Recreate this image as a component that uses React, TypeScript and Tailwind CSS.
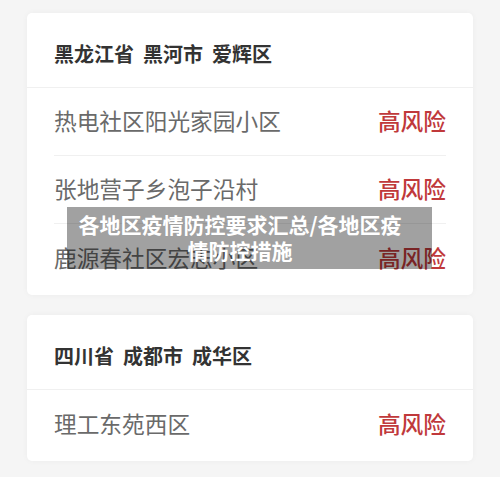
import React from "react";

const font = { fontFamily: '"Noto Sans CJK SC", "Noto Sans", sans-serif' };

function Row({ name, last }: { name: string; last?: boolean }) {
  return (
    <div className="px-[27px]">
      <div className={`flex h-[68px] items-center justify-between ${last ? "" : "border-b border-[#f0f0f0]"}`}>
        <span className="text-[22.7px] text-[#6a6a6a]">{name}</span>
        <span className="text-[22.7px] font-medium text-[#c0393b]">高风险</span>
      </div>
    </div>
  );
}

function Card({ title, rows }: { title: string[]; rows: string[] }) {
  return (
    <div className="overflow-hidden rounded-[5px] bg-white pb-[3px] shadow-[0_0_6px_rgba(0,0,0,0.04)]">
      <div className="flex h-[75px] items-center gap-[9px] border-b border-[#f0f0f0] px-[27px] pt-[7px]">
        {title.map((t) => (
          <span key={t} className="text-[20px] font-bold text-[#333333]">{t}</span>
        ))}
      </div>
      {rows.map((r, i) => (
        <Row key={r} name={r} last={i === rows.length - 1} />
      ))}
    </div>
  );
}

export default function App() {
  return (
    <div className="relative h-[477px] w-[500px] overflow-hidden bg-[#f5f5f5]" style={font}>
      <div className="flex flex-col gap-[20px] px-[27px] pt-[13px]">
        <Card title={["黑龙江省", "黑河市", "爱辉区"]} rows={["热电社区阳光家园小区", "张地营子乡泡子沿村", "鹿源春社区宏志小区"]} />
        <Card title={["四川省", "成都市", "成华区"]} rows={["理工东苑西区"]} />
      </div>
      <div className="absolute left-[67px] top-[207px] h-[62px] w-[365px] bg-[rgba(0,0,0,0.37)] pl-[9px] pt-[4px]">
        <div className="w-[328px] text-center text-[21px] font-bold leading-[26px] text-white">
          各地区疫情防控要求汇总/各地区疫情防控措施
        </div>
      </div>
    </div>
  );
}
